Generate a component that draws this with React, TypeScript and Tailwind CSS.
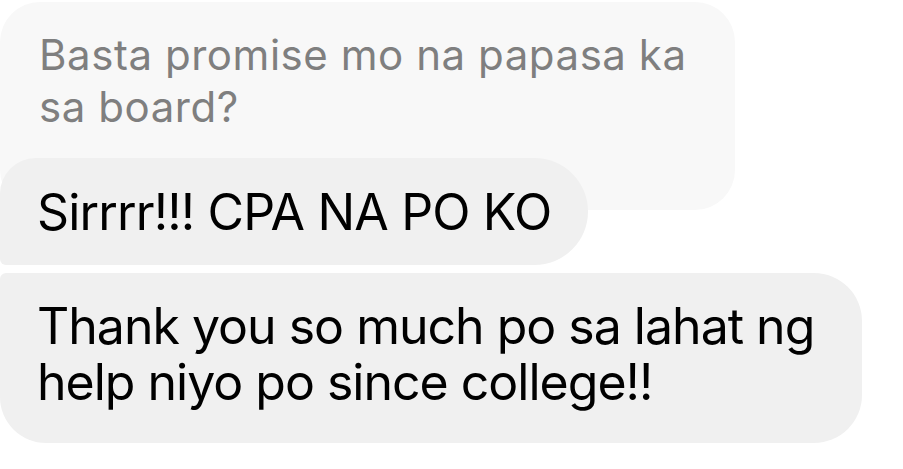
export default function App() {
  return (
    <div className="w-[903px] h-[469px] bg-white overflow-hidden font-['Inter',sans-serif]">
      <div className="flex flex-col items-start pt-[2px]">
        {/* quoted reply */}
        <div className="w-[735px] h-[208px] bg-[#f8f8f8] rounded-[40px] pl-[39px] pt-[27px] text-[42px] leading-[52px] text-[#7f7f7f] tracking-[0.55px] whitespace-nowrap">
          Basta promise mo na papasa ka
          <br />
          sa board?
        </div>

        {/* messages */}
        <div className="relative -mt-[52px] w-[588px] h-[107px] bg-[#f0f0f0] rounded-l-[36px] rounded-bl-[6px] rounded-r-[54px] pl-[37px] pt-[26px] text-[50px] leading-[56px] text-black tracking-[-0.85px] whitespace-nowrap">
          Sirrrr!!! CPA NA PO KO
        </div>

        <div className="mt-[8px] w-[862px] h-[170px] bg-[#f0f0f0] rounded-tl-[6px] rounded-bl-[46px] rounded-r-[48px] pl-[37px] pt-[25px] text-[50px] leading-[56px] text-black tracking-[-1px] whitespace-nowrap">
          Thank you so much po sa lahat ng
          <br />
          help niyo po since college!!
        </div>
      </div>
    </div>
  );
}
